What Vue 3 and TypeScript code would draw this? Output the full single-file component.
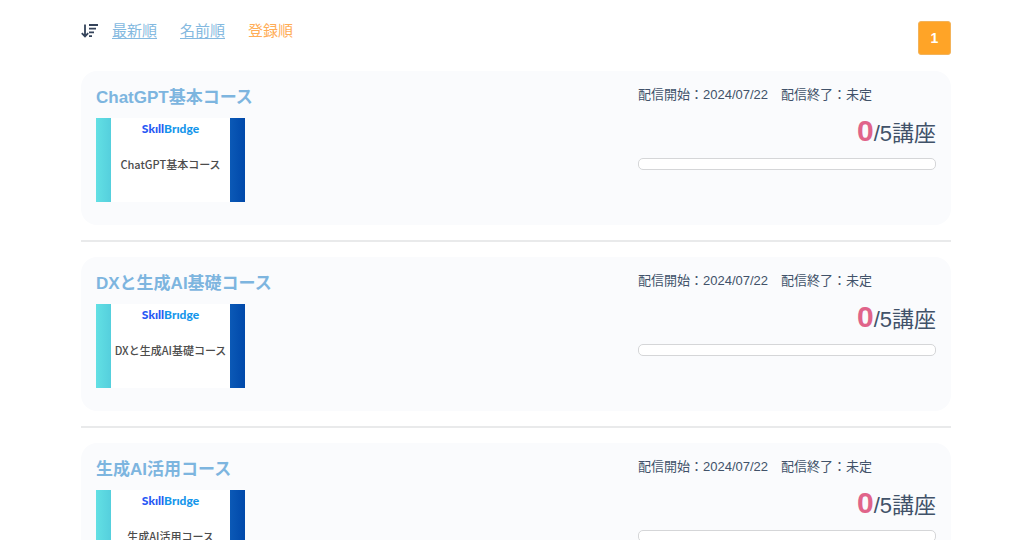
<script setup lang="ts">
import { ref } from 'vue'

interface Course {
  id: number
  title: string
  start: string
  end: string
  done: number
  total: number
}

const sorts: string[] = ['最新順', '名前順', '登録順']
const activeSort = ref('登録順')

const courses: Course[] = [
  { id: 1, title: 'ChatGPT基本コース', start: '2024/07/22', end: '未定', done: 0, total: 5 },
  { id: 2, title: 'DXと生成AI基礎コース', start: '2024/07/22', end: '未定', done: 0, total: 5 },
  { id: 3, title: '生成AI活用コース', start: '2024/07/22', end: '未定', done: 0, total: 5 },
]
</script>

<template>
  <main class="page">
    <header class="toolbar">
      <nav class="sorts" aria-label="並び替え">
        <svg class="sort-icon" viewBox="0 0 18 16" aria-hidden="true">
          <path d="M4 1.5v12M0.8 10.2l3.2 3.3 3.2-3.3" fill="none" stroke="currentColor" stroke-width="1.8" />
          <path d="M8 2H17M8 5.7h7M8 9.4h5M8 13.1h3" fill="none" stroke="currentColor" stroke-width="1.8" />
        </svg>
        <a
          v-for="sort in sorts"
          :key="sort"
          href="#"
          class="sort"
          :class="{ active: sort === activeSort }"
          @click.prevent="activeSort = sort"
        >{{ sort }}</a>
      </nav>
      <button type="button" class="page-button" aria-current="page">1</button>
    </header>

    <ul class="courses">
      <li v-for="course in courses" :key="course.id" class="item">
        <article class="card">
          <div class="summary">
            <h2 class="title"><a href="#">{{ course.title }}</a></h2>
            <div class="thumb">
              <p class="logo"><span class="logo-skill">Skıll</span><span class="logo-bridge">Brıdge</span></p>
              <p class="caption">{{ course.title }}</p>
            </div>
          </div>
          <div class="status">
            <p class="dates">配信開始：{{ course.start }}　配信終了：{{ course.end }}</p>
            <p class="count"><strong>{{ course.done }}</strong>/{{ course.total }}講座</p>
            <div
              class="bar"
              role="progressbar"
              aria-label="受講状況"
              aria-valuemin="0"
              :aria-valuenow="course.done"
              :aria-valuemax="course.total"
            >
              <div class="fill" :style="{ width: (course.done / course.total) * 100 + '%' }"></div>
            </div>
          </div>
        </article>
      </li>
    </ul>
  </main>
</template>

<style>
body {
  margin: 0;
  background: #fff;
}

html {
  scrollbar-width: none;
}
</style>

<style scoped>
.page {
  padding: 21px 73px 0 81px;
  color: #415269;
  font-family: "Liberation Sans", "Noto Sans CJK JP", sans-serif;
}

p,
h2,
ul {
  margin: 0;
  padding: 0;
}

.toolbar {
  display: flex;
  justify-content: space-between;
  align-items: flex-start;
  margin-bottom: 16px;
}

.sorts {
  display: flex;
  align-items: center;
  gap: 23px;
  font-size: 15px;
  line-height: 20px;
}

.sort-icon {
  width: 18px;
  height: 16px;
  margin-right: -10px;
  color: #34435a;
}

.sort {
  color: #84b9e0;
  text-underline-offset: 2px;
}

.sort.active {
  color: #ffad57;
  text-decoration: none;
}

.page-button {
  width: 33px;
  height: 34px;
  padding: 0;
  border: 1px solid #f3b35a;
  border-radius: 3px;
  background: #ffa427;
  color: #fff;
  font: bold 14px "Liberation Sans", sans-serif;
}

.courses {
  list-style: none;
}

.item + .item {
  margin-top: 15px;
  padding-top: 15px;
  border-top: 2px solid #e9eaeb;
}

.card {
  display: grid;
  grid-template-columns: 1fr 298px;
  min-height: 154px;
  padding: 15px;
  border-radius: 16px;
  background: #fafbfd;
  box-sizing: border-box;
}

.title {
  margin-bottom: 8px;
  font-size: 17px;
  line-height: 24px;
}

.title a {
  color: #7db5df;
  text-decoration: none;
}

.thumb {
  width: 149px;
  height: 84px;
  padding-top: 3px;
  background:
    linear-gradient(90deg, #62e0e4, #55cfdd) left / 15px 100% no-repeat,
    linear-gradient(90deg, #0b59b6, #0048aa) right / 15px 100% no-repeat,
    #fff;
  box-sizing: border-box;
  text-align: center;
  white-space: nowrap;
}

.logo {
  font: 900 12px/16px "Lato", sans-serif;
}

.logo-skill {
  color: #2758f4;
}

.logo-bridge {
  color: #1496eb;
}

.caption {
  margin-top: 19px;
  color: #4c4c4c;
  font: 500 11px/16px "Noto Sans CJK JP", sans-serif;
}

.dates {
  font-size: 13px;
  line-height: 18px;
}

.count {
  margin: 11px 0 8px;
  font-size: 22px;
  line-height: 32px;
  text-align: right;
}

.count strong {
  color: #e0648a;
  font-size: 30px;
}

.bar {
  height: 12px;
  border: 1px solid #d5d6d8;
  border-radius: 5px;
  background: #fff;
  box-sizing: border-box;
  overflow: hidden;
}

.fill {
  height: 100%;
  background: #e0648a;
}
</style>
